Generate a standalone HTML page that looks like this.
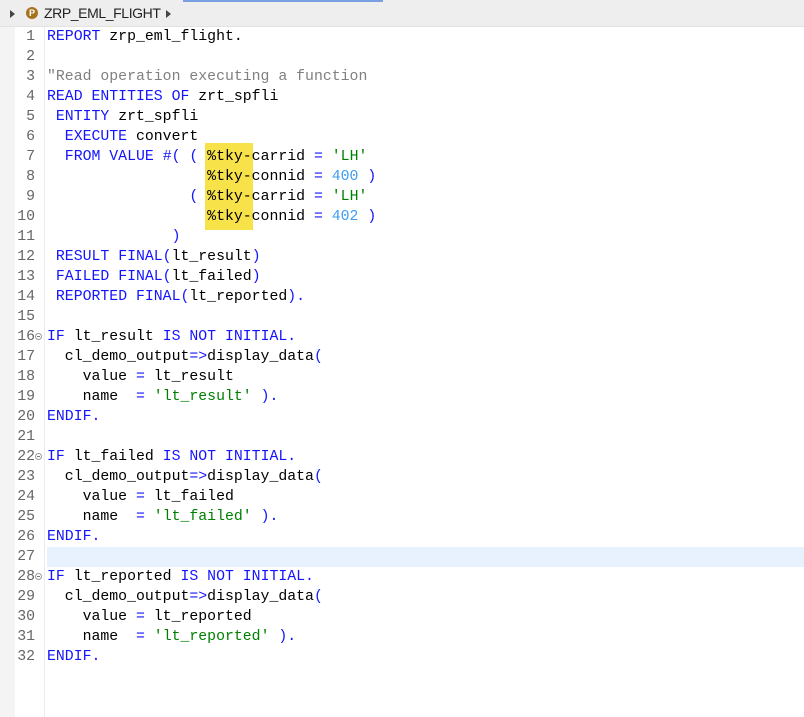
<!DOCTYPE html>
<html><head><style>
body{margin:0;width:804px;height:717px;background:#fff;position:relative;overflow:hidden;font-family:"Liberation Mono",monospace}
#hdr{position:absolute;left:0;top:0;width:804px;height:27px;background:#eeeeee;border-bottom:1px solid #e2e2e2;box-sizing:border-box}
#blue{position:absolute;left:183px;top:0;width:200px;height:2px;background:#7a9fe0}
#title{position:absolute;left:44px;top:5px;font:14px "Liberation Sans",sans-serif;color:#222;letter-spacing:-0.4px}
#ico{position:absolute;left:26px;top:7px;width:12px;height:12px;border-radius:50%;background:#a8731f;color:#fff;font:bold 9px "Liberation Sans",sans-serif;text-align:center;line-height:12px}
.tri{position:absolute;top:10px;width:0;height:0;border-top:4px solid transparent;border-bottom:4px solid transparent;border-left:5px solid #444}
#gut{position:absolute;left:0;top:27px;width:15px;height:690px;background:#f4f4f4}
#sep{position:absolute;left:44px;top:27px;width:1px;height:690px;background:#ececec}
#cur{position:absolute;left:47px;top:547px;width:757px;height:20px;background:#e8f2fe}
#hl{position:absolute;left:205px;top:143px;width:48px;height:87px;background:#f8e24a}
.ln{position:absolute;left:0;width:35px;text-align:right;color:#666;font-size:14.83px;line-height:20px;height:20px}
.cd{position:absolute;left:47px;font-size:14.83px;line-height:20px;height:20px;white-space:pre;color:#000}
.k{color:#1414ff}.c{color:#808080}.s{color:#008000}.n{color:#3d9cf0}
.fold{position:absolute;left:35px;width:7px;height:7px;border:1px solid #999;border-radius:50%;box-sizing:border-box}
.fold:after{content:"";position:absolute;left:1px;top:2px;width:3px;height:1px;background:#777}
</style></head><body>
<div id="hdr"></div><div id="blue"></div>
<div class="tri" style="left:10px"></div>
<div id="ico">P</div>
<div id="title">ZRP_EML_FLIGHT</div>
<div class="tri" style="left:166px"></div>
<div id="gut"></div><div id="sep"></div>
<div id="cur"></div>
<div id="hl"></div>

<div class="ln" style="top:27px">1</div><div class="cd" style="top:27px"><span class="k">REPORT</span> zrp_eml_flight.</div>
<div class="ln" style="top:47px">2</div>
<div class="ln" style="top:67px">3</div><div class="cd" style="top:67px"><span class="c">"Read operation executing a function</span></div>
<div class="ln" style="top:87px">4</div><div class="cd" style="top:87px"><span class="k">READ ENTITIES OF</span> zrt_spfli</div>
<div class="ln" style="top:107px">5</div><div class="cd" style="top:107px"> <span class="k">ENTITY</span> zrt_spfli</div>
<div class="ln" style="top:127px">6</div><div class="cd" style="top:127px">  <span class="k">EXECUTE</span> convert</div>
<div class="ln" style="top:147px">7</div><div class="cd" style="top:147px">  <span class="k">FROM VALUE</span> <span class="k">#( (</span> %tky-carrid <span class="k">=</span> <span class="s">'LH'</span></div>
<div class="ln" style="top:167px">8</div><div class="cd" style="top:167px">                  %tky-connid <span class="k">=</span> <span class="n">400</span> <span class="k">)</span></div>
<div class="ln" style="top:187px">9</div><div class="cd" style="top:187px">                <span class="k">(</span> %tky-carrid <span class="k">=</span> <span class="s">'LH'</span></div>
<div class="ln" style="top:207px">10</div><div class="cd" style="top:207px">                  %tky-connid <span class="k">=</span> <span class="n">402</span> <span class="k">)</span></div>
<div class="ln" style="top:227px">11</div><div class="cd" style="top:227px">              <span class="k">)</span></div>
<div class="ln" style="top:247px">12</div><div class="cd" style="top:247px"> <span class="k">RESULT FINAL(</span>lt_result<span class="k">)</span></div>
<div class="ln" style="top:267px">13</div><div class="cd" style="top:267px"> <span class="k">FAILED FINAL(</span>lt_failed<span class="k">)</span></div>
<div class="ln" style="top:287px">14</div><div class="cd" style="top:287px"> <span class="k">REPORTED FINAL(</span>lt_reported<span class="k">).</span></div>
<div class="ln" style="top:307px">15</div>
<div class="ln" style="top:327px">16</div><div class="fold" style="top:333px"></div><div class="cd" style="top:327px"><span class="k">IF</span> lt_result <span class="k">IS NOT INITIAL.</span></div>
<div class="ln" style="top:347px">17</div><div class="cd" style="top:347px">  cl_demo_output<span class="k">=&gt;</span>display_data<span class="k">(</span></div>
<div class="ln" style="top:367px">18</div><div class="cd" style="top:367px">    value <span class="k">=</span> lt_result</div>
<div class="ln" style="top:387px">19</div><div class="cd" style="top:387px">    name  <span class="k">=</span> <span class="s">'lt_result'</span> <span class="k">).</span></div>
<div class="ln" style="top:407px">20</div><div class="cd" style="top:407px"><span class="k">ENDIF.</span></div>
<div class="ln" style="top:427px">21</div>
<div class="ln" style="top:447px">22</div><div class="fold" style="top:453px"></div><div class="cd" style="top:447px"><span class="k">IF</span> lt_failed <span class="k">IS NOT INITIAL.</span></div>
<div class="ln" style="top:467px">23</div><div class="cd" style="top:467px">  cl_demo_output<span class="k">=&gt;</span>display_data<span class="k">(</span></div>
<div class="ln" style="top:487px">24</div><div class="cd" style="top:487px">    value <span class="k">=</span> lt_failed</div>
<div class="ln" style="top:507px">25</div><div class="cd" style="top:507px">    name  <span class="k">=</span> <span class="s">'lt_failed'</span> <span class="k">).</span></div>
<div class="ln" style="top:527px">26</div><div class="cd" style="top:527px"><span class="k">ENDIF.</span></div>
<div class="ln" style="top:547px">27</div>
<div class="ln" style="top:567px">28</div><div class="fold" style="top:573px"></div><div class="cd" style="top:567px"><span class="k">IF</span> lt_reported <span class="k">IS NOT INITIAL.</span></div>
<div class="ln" style="top:587px">29</div><div class="cd" style="top:587px">  cl_demo_output<span class="k">=&gt;</span>display_data<span class="k">(</span></div>
<div class="ln" style="top:607px">30</div><div class="cd" style="top:607px">    value <span class="k">=</span> lt_reported</div>
<div class="ln" style="top:627px">31</div><div class="cd" style="top:627px">    name  <span class="k">=</span> <span class="s">'lt_reported'</span> <span class="k">).</span></div>
<div class="ln" style="top:647px">32</div><div class="cd" style="top:647px"><span class="k">ENDIF.</span></div>
</body></html>
